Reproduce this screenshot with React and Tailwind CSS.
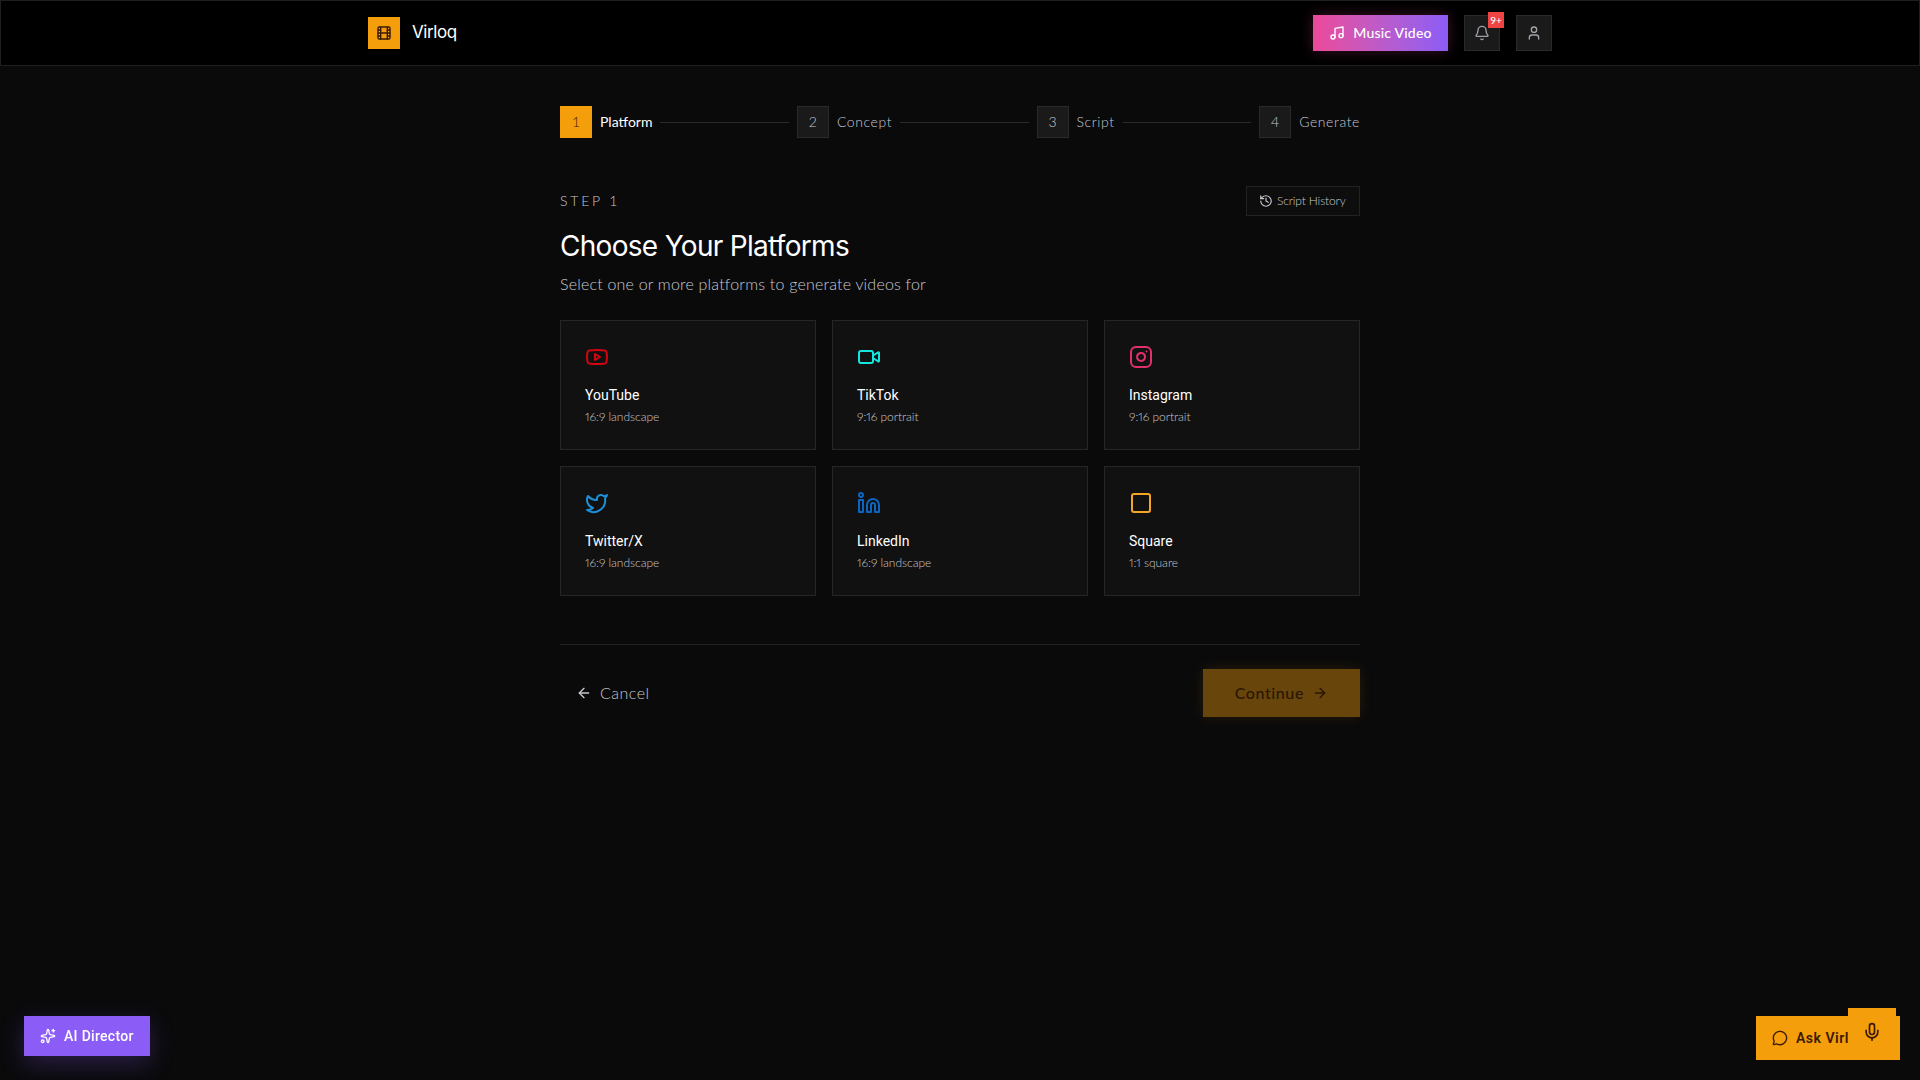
import React from 'react';
import {
  Film, Music, Bell, User, History, Youtube, Video, Instagram, Twitter, Linkedin,
  Square, ArrowLeft, ArrowRight, Sparkles, MessageCircle, Mic,
} from 'lucide-react';

const steps = [
  { n: 1, label: 'Platform', active: true },
  { n: 2, label: 'Concept' },
  { n: 3, label: 'Script' },
  { n: 4, label: 'Generate' },
];

const platforms = [
  { name: 'YouTube', format: '16:9 landscape', icon: Youtube, color: 'text-[#d40511]' },
  { name: 'TikTok', format: '9:16 portrait', icon: Video, color: 'text-[#14e6df]' },
  { name: 'Instagram', format: '9:16 portrait', icon: Instagram, color: 'text-[#e1306c]' },
  { name: 'Twitter/X', format: '16:9 landscape', icon: Twitter, color: 'text-[#1d8fd8]' },
  { name: 'LinkedIn', format: '16:9 landscape', icon: Linkedin, color: 'text-[#0a66c2]' },
  { name: 'Square', format: '1:1 square', icon: Square, color: 'text-[#f5a524]' },
];

const Header = () => (
  <header className="h-[66px] bg-black border border-[#1f1f1f]">
    <div className="max-w-7xl mx-auto px-12 h-full flex items-center justify-between">
      <div className="flex items-center gap-3">
        <div className="w-8 h-8 bg-[#f59e0b] flex items-center justify-center">
          <Film className="w-4 h-4 text-[#3a1a05]" />
        </div>
        <span className="text-[17px] font-normal text-white font-['Inter',sans-serif] tracking-tight">Virloq</span>
      </div>
      <div className="flex items-center gap-4">
        <button className="h-9 w-[135px] flex items-center justify-center gap-2 text-sm font-medium tracking-[0.2px] text-white bg-gradient-to-r from-[#ec4899] to-[#8b5cf6] shadow-[0_0_14px_rgba(236,72,153,0.25)]">
          <Music className="w-4 h-4" />
          Music Video
        </button>
        <button className="relative w-9 h-9 flex items-center justify-center bg-[#1a1a1a] border border-[#2a2a2a] text-[#a1a1aa]">
          <Bell className="w-4 h-4" />
          <span className="absolute -top-[4px] -right-[5px] w-4 h-4 bg-[#ef4444] text-white text-[10px] leading-4 text-center font-medium">9+</span>
        </button>
        <button className="w-9 h-9 flex items-center justify-center bg-[#1a1a1a] border border-[#2a2a2a] text-[#a1a1aa]">
          <User className="w-4 h-4" />
        </button>
      </div>
    </div>
  </header>
);

const Stepper = () => (
  <div className="flex items-center">
    {steps.map((s, i) => (
      <React.Fragment key={s.n}>
        <div className="flex items-center gap-2">
          <div className={s.active
            ? 'w-8 h-8 flex items-center justify-center text-sm font-light bg-[#f59e0b] text-[#3a1a05]'
            : 'w-8 h-8 flex items-center justify-center text-sm font-light bg-[#1a1a1a] border border-[#2a2a2a] text-[#c8c8d0]'}>
            {s.n}
          </div>
          <span className={s.active ? 'text-sm text-white' : 'text-sm font-light tracking-[0.6px] text-[#c8c8d0]'}>{s.label}</span>
        </div>
        {i < steps.length - 1 && <div className="flex-1 h-px bg-[#2a2a2a] mx-2" />}
      </React.Fragment>
    ))}
  </div>
);

const PlatformCard = ({ name, format, icon: Icon, color }) => (
  <div className="h-[130px] p-6 bg-[#111111] border border-[#262626]">
    <Icon className={`w-6 h-6 mb-4 ${color}`} />
    <p className="text-sm font-normal text-white font-['Roboto',sans-serif]">{name}</p>
    <p className="text-xs font-light text-[#c8c8d0] mt-1 proportional-nums tracking-[-0.05px]">{format}</p>
  </div>
);

export default function App() {
  return (
    <div className="min-h-screen bg-[#0a0a0b] font-['Lato',sans-serif]">
      <Header />
      <main className="max-w-4xl mx-auto px-12 pt-10">
        <Stepper />

        <div className="mt-12 flex items-center justify-between">
          <span className="text-sm font-light tracking-[0.2em] text-[#c8c8d0] uppercase">Step 1</span>
          <button className="h-[30px] w-[114px] px-3 flex items-center gap-1 text-xs font-light tracking-[-0.15px] text-[#c8c8d0] bg-[#0d0d0d] border border-[#222222]">
            <History className="w-3.5 h-3.5" />
            Script History
          </button>
        </div>

        <h1 className="mt-3 text-[28px] leading-9 font-normal text-white font-['Inter',sans-serif] tracking-tight">Choose Your Platforms</h1>
        <p className="mt-2 text-base font-light tracking-[0.2px] text-[#c8c8d0]">Select one or more platforms to generate videos for</p>

        <div className="mt-6 grid grid-cols-3 gap-4">
          {platforms.map(p => <PlatformCard key={p.name} {...p} />)}
        </div>

        <div className="mt-12 pt-6 border-t border-[#222222] flex items-center justify-between">
          <button className="h-12 px-4 flex items-center gap-2 text-base font-light tracking-[0.5px] text-[#c8c8d0]">
            <ArrowLeft className="w-4 h-4" />
            Cancel
          </button>
          <button className="h-12 px-8 flex items-center gap-2 text-base font-medium tracking-[0.6px] bg-[#f59e0b]/40 text-[#2a1605] shadow-[0_0_14px_rgba(245,158,11,0.12)]">
            Continue
            <ArrowRight className="w-4 h-4" />
          </button>
        </div>
      </main>

      <button className="fixed left-6 bottom-6 w-[126px] h-10 px-4 flex items-center gap-2 text-sm font-medium text-white bg-[#8b5cf6] shadow-[0_8px_24px_rgba(139,92,246,0.25)] font-['Roboto',sans-serif] tracking-[0.3px]">
        <Sparkles className="w-4 h-4" />
        AI Director
      </button>

      <button className="fixed right-5 bottom-5 w-36 h-11 px-4 flex items-center gap-2 text-sm font-semibold tracking-[0.5px] text-[#3a1a05] bg-[#f59e0b] font-['Roboto',sans-serif] overflow-hidden">
        <MessageCircle className="w-4 h-4" />
        Ask Virlo
      </button>
      <button className="fixed right-6 bottom-6 w-12 h-12 flex items-center justify-center bg-[#f59e0b] text-[#3a1a05]">
        <Mic className="w-5 h-5" />
      </button>
    </div>
  );
}
